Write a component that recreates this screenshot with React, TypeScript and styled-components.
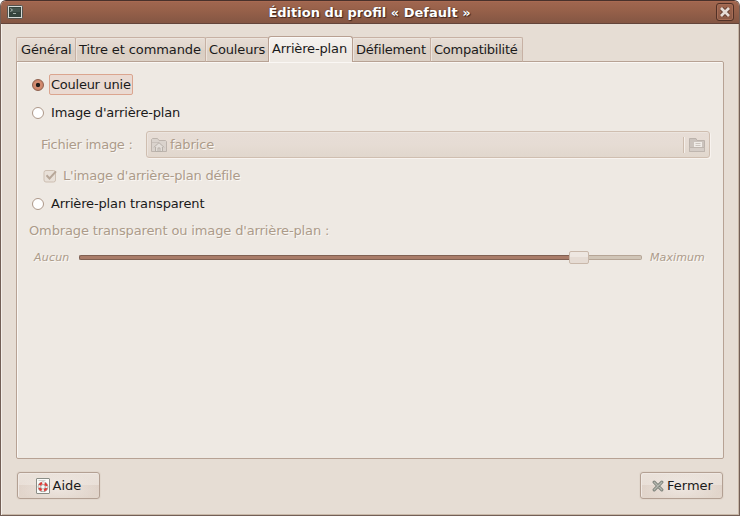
import React from "react";
import styled, { createGlobalStyle } from "styled-components";

const Global = createGlobalStyle`
  * { box-sizing: border-box; }
  html, body { margin: 0; padding: 0; background: #fff; }
  body { font-family: "DejaVu Sans", sans-serif; font-size: 13px; line-height: 20px; color: #1a1a1a; overflow: hidden; }
  svg { display: block; flex: none; }
`;

const Window = styled.div`
  width: 740px;
  height: 516px;
  display: flex;
  flex-direction: column;
  background: #e6ddd4;
  border: 1px solid #735f56;
  border-top-color: #49312b;
  border-radius: 6px 6px 0 0;
  overflow: hidden;
  box-shadow: inset 1px 0 #f5f0eb, inset -1px -1px #c8b8a8;
`;

const TitleBar = styled.header`
  height: 23px;
  flex: none;
  display: flex;
  align-items: center;
  padding: 0 5px 0 6px;
  background: linear-gradient(#b06e55 0, #a0664f 1px, #966049 10px, #845643 22px);
  border-bottom: 1px solid #63443a;
`;

const Title = styled.h1`
  flex: 1;
  margin: 0;
  padding: 1px 0 0;
  font-size: 13px;
  line-height: 20px;
  text-align: center;
  color: #fff;
  white-space: nowrap;
  text-shadow: 1px 1px 1px #40251c, 0 0 1px #40251c;
`;

const CloseButton = styled.button`
  width: 18px;
  height: 18px;
  padding: 0;
  display: grid;
  place-items: center;
  border: 1px solid #513026;
  border-radius: 3px;
  background: linear-gradient(#a0664f, #8b5a46);
  box-shadow: inset 0 0 0 1px #a66d56;
`;

const Body = styled.main`
  flex: 1;
  display: flex;
  flex-direction: column;
  padding: 12px 15px 16px;
`;

const Tabs = styled.nav`
  height: 26px;
  display: flex;
  align-items: flex-end;
  margin-bottom: -1px;
`;

const Tab = styled.button<{ $w: number; $active?: boolean; $track?: number }>`
  font: inherit;
  color: #1a1a1a;
  width: ${(p) => p.$w}px;
  height: ${(p) => (p.$active ? 26 : 25)}px;
  padding: ${(p) => (p.$active ? "0 0 1px 3px" : "0 0 0 4px")};
  margin-right: -1px;
  border: 1px solid ${(p) => (p.$active ? "#b8a092" : "#c7b1a4")};
  border-bottom: ${(p) => (p.$active ? "0" : "1px solid #b7a294")};
  border-radius: ${(p) => (p.$active ? "3px 3px 0 0" : "2px 2px 0 0")};
  background: ${(p) =>
    p.$active
      ? "linear-gradient(#f5f2ef, #f1ece8 50%, #eee9e3 50%, #eee9e3)"
      : "linear-gradient(#e7ddd5, #e0d5cb 50%, #d9cec3 50%, #dcd1c6)"};
  box-shadow: inset 1px 1px ${(p) => (p.$active ? "#fbf9f7" : "#ece4dc")};
  position: relative;
  z-index: ${(p) => (p.$active ? 2 : 1)};
  letter-spacing: ${(p) => p.$track ?? 0}px;
  white-space: nowrap;
  display: flex;
  align-items: center;
  justify-content: flex-start;

  & + & {
    padding-left: 3px;
  }
`;

const Panel = styled.section`
  width: 708px;
  height: 398px;
  flex: none;
  border: 1px solid #b7a294;
  border-radius: 0 2px 2px 2px;
  background: #eee9e3;
  box-shadow: inset 1px 1px #faf7f4;
  padding: 12px 13px 0 12px;
`;

const Row = styled.div<{ $h: number; $left?: number; $gap?: number }>`
  height: ${(p) => p.$h}px;
  margin-bottom: ${(p) => p.$gap ?? 0}px;
  padding-left: ${(p) => p.$left ?? 0}px;
  display: flex;
  align-items: center;
`;

const Label = styled.span<{ $track?: number; $disabled?: boolean; $small?: boolean }>`
  white-space: nowrap;
  letter-spacing: ${(p) => p.$track ?? 0}px;
  color: ${(p) => (p.$disabled ? "#ac9b8a" : "#1a1a1a")};
  text-shadow: ${(p) => (p.$disabled ? "1px 1px #faf7f3" : "none")};
  font-size: ${(p) => (p.$small ? 11 : 13)}px;
  font-style: ${(p) => (p.$small ? "italic" : "normal")};
`;

const RadioDot = styled.span<{ $on?: boolean }>`
  width: 12px;
  height: 12px;
  flex: none;
  margin: 0 7px 0 3px;
  border-radius: 50%;
  border: 1px solid ${(p) => (p.$on ? "#8e5f4c" : "#ad9889")};
  background: ${(p) =>
    p.$on ? "radial-gradient(circle, #201b19 0 1.8px, #d88f73 2.6px, #c98267 5px)" : "#fff"};
`;

const Focus = styled.span`
  width: 84px;
  height: 21px;
  margin-left: -2px;
  padding: 0 0 0 1px;
  line-height: 19px;
  border: 1px solid #dba58f;
  border-radius: 2px;
  background: #eadad2;
`;

const FileButton = styled.div`
  width: 564px;
  height: 27px;
  margin-left: auto;
  padding: 0 4px;
  display: flex;
  align-items: center;
  gap: 3px;
  border: 1px solid #cfbeb0;
  border-radius: 3px;
  background: linear-gradient(#e7ddd6, #e6dcd4 50%, #e1d7cd);
  box-shadow: 1px 1px #f8f3ef, inset 1px 1px #ece5df;
`;

const Divider = styled.i`
  width: 2px;
  height: 16px;
  margin-left: auto;
  margin-right: 1px;
  background: #cdbcae;
  border-right: 1px solid #f5efea;
`;

const CheckGap = styled.i`
  width: 5px;
`;

const Track = styled.div`
  width: 563px;
  height: 14px;
  flex: none;
  display: flex;
  align-items: center;
`;

const Rail = styled.i<{ $w: number; $filled?: boolean }>`
  width: ${(p) => p.$w}px;
  height: 5px;
  border: 1px solid ${(p) => (p.$filled ? "#806052" : "#b5a596")};
  border-width: ${(p) => (p.$filled ? "1px 0 1px 1px" : "1px 1px 1px 0")};
  border-radius: ${(p) => (p.$filled ? "2px 0 0 2px" : "0 2px 2px 0")};
  background: ${(p) => (p.$filled ? "#a97c69" : "#d0c5b7")};
`;

const Thumb = styled.i`
  width: 20px;
  height: 13px;
  border: 1px solid #c9b8aa;
  border-radius: 2px;
  background: linear-gradient(#eee7e1 50%, #e6dcd4 50%);
`;

const ScaleEnd = styled.span<{ $w: number }>`
  width: ${(p) => p.$w}px;
  height: 20px;
  line-height: 19px;
  flex: none;
`;

const Footer = styled.footer`
  display: flex;
  justify-content: space-between;
  padding: 13px 1px 0;
`;

const ActionButton = styled.button<{ $shift?: number }>`
  width: 83px;
  height: 27px;
  padding: 0 0 0 ${(p) => p.$shift ?? 0}px;
  font: inherit;
  color: #1a1a1a;
  display: flex;
  align-items: center;
  justify-content: center;
  gap: 3px;
  border: 1px solid #b3a093;
  border-radius: 3px;
  background: radial-gradient(ellipse at 50% 60%, rgba(241, 235, 230, 0.8), transparent 70%),
    linear-gradient(#eae2db, #e9dfd7 48%, #e0d3c9 50%, #e2d6cc);
  box-shadow: inset 1px 1px #f0e9e4, 0 0 0 1px #e1d7cd;
`;

const TerminalIcon = () => (
  <svg width="16" height="14" viewBox="0 0 16 14">
    <rect x=".5" y=".5" width="15" height="13" rx="1" fill="#d6dad6" stroke="#55534e" />
    <rect x="2" y="2" width="12" height="10" fill="#35443d" />
    <path d="M3 3h10v4H3z" fill="#46554e" />
    <path d="M3.500 3.500l2 1.500-2 1.500M6 8.500h3" fill="none" stroke="#c3ccc5" strokeWidth=".8" />
  </svg>
);

const TitleCross = () => (
  <svg width="12" height="12" viewBox="0 0 12 12">
    <path d="M2.500 2.500l7 7m0-7l-7 7" stroke="#5b372b" strokeWidth="4.400" />
    <path d="M2 2l8 8m0-8L2 10" stroke="#e6dcd6" strokeWidth="2.700" />
  </svg>
);

const HomeFolder = () => (
  <svg width="16" height="16" viewBox="0 0 16 16">
    <path d="M.5 14.500V2.500l1-1h5l1.500 2h6.500l1 1v10z" fill="#dad3cd" stroke="#bdb4ad" />
    <path d="M1 5.500h7" stroke="#c9c1bb" />
    <path d="M4.500 10v4.500h7V10M2.700 10.500L8 5.700l5.300 4.800" fill="#e3ded9" stroke="#b7b0a9" />
    <path d="M7 14v-3h2v3" fill="none" stroke="#b7b0a9" />
  </svg>
);

const OpenFolder = () => (
  <svg width="16" height="16" viewBox="0 0 16 16">
    <path d="M.5 14.500V1.500h6.500l1 2h7.500v11z" fill="#cbc3bd" stroke="#bcb3ac" />
    <path d="M5 5h8v6H5z" fill="#f0ece8" />
    <path d="M6.500 6.500h5m-5 2h5" stroke="#cbc4be" />
    <path d="M.5 10.500h15v4H.5z" fill="#d5cdc7" stroke="#bfb6af" />
  </svg>
);

const DisabledCheck = () => (
  <svg width="15" height="14" viewBox="0 0 15 14">
    <rect x="1" y="1.500" width="11.500" height="11.500" rx="2" fill="#e8e0d8" stroke="#cdbfb2" />
    <path d="M3.500 6.300l3 3.200L13 2.300" fill="none" stroke="#b7a799" strokeWidth="2" />
  </svg>
);

const HelpIcon = () => (
  <svg width="14" height="16" viewBox="0 0 14 16">
    <rect x=".5" y=".5" width="13" height="15" rx=".5" fill="#fbfbf9" stroke="#8a8d86" />
    <path d="M2.500 2.500h7" stroke="#cfd1cd" />
    <circle cx="7" cy="8.800" r="3.600" fill="none" stroke="#8f8f88" strokeWidth="3.400" />
    <circle cx="7" cy="8.800" r="3.600" fill="none" stroke="#f2efec" strokeWidth="2.200" />
    <circle cx="7" cy="8.800" r="3.700" fill="none" stroke="#e03a36" strokeWidth="2.200" strokeDasharray="3.200 2.612" strokeDashoffset="-1.306" />
  </svg>
);

const GreyCross = () => (
  <svg width="12" height="12" viewBox="0 0 12 12">
    <path d="M2.200 2.200l7.600 7.600m0-7.600L2.200 9.800" stroke="#7d8079" strokeWidth="3.200" strokeLinecap="round" />
    <path d="M2.200 2.200l7.600 7.600m0-7.600L2.200 9.800" stroke="#b4b8b0" strokeWidth="1.400" strokeLinecap="round" />
  </svg>
);

export default function App() {
  return (
    <>
      <Global />
      <Window>
        <TitleBar>
          <TerminalIcon />
          <Title>Édition du profil « Default »</Title>
          <CloseButton aria-label="Fermer la fenêtre"><TitleCross /></CloseButton>
        </TitleBar>
        <Body>
          <Tabs>
            <Tab $w={60} $track={-0.1}>Général</Tab>
            <Tab $w={131} $track={-0.1}>Titre et commande</Tab>
            <Tab $w={64} $track={-0.15}>Couleurs</Tab>
            <Tab $w={85} $track={-0.15} $active>Arrière-plan</Tab>
            <Tab $w={79} $track={-0.2}>Défilement</Tab>
            <Tab $w={93} $track={-0.25}>Compatibilité</Tab>
          </Tabs>
          <Panel>
            <Row $h={21} $gap={8}>
              <RadioDot $on />
              <Focus><Label $track={-0.25}>Couleur unie</Label></Focus>
            </Row>
            <Row $h={20} $gap={8}>
              <RadioDot />
              <Label $track={-0.17}>Image d'arrière-plan</Label>
            </Row>
            <Row $h={27} $left={12} $gap={8}>
              <Label $disabled $track={-0.27}>Fichier image :</Label>
              <FileButton>
                <HomeFolder />
                <Label $disabled $track={-0.1}>fabrice</Label>
                <Divider />
                <OpenFolder />
              </FileButton>
            </Row>
            <Row $h={20} $left={14} $gap={8}>
              <DisabledCheck />
              <CheckGap />
              <Label $disabled $track={-0.21}>L'image d'arrière-plan défile</Label>
            </Row>
            <Row $h={20} $gap={7}>
              <RadioDot />
              <Label $track={-0.15}>Arrière-plan transparent</Label>
            </Row>
            <Row $h={20} $gap={6}>
              <Label $disabled $track={-0.13}>Ombrage transparent ou image d'arrière-plan :</Label>
            </Row>
            <Row $h={20} $left={5}>
              <ScaleEnd $w={45}><Label $disabled $small $track={0.2}>Aucun</Label></ScaleEnd>
              <Track>
                <Rail $w={490} $filled />
                <Thumb />
                <Rail $w={53} />
              </Track>
              <Row $h={20} $left={8} as="span">
                <ScaleEnd $w={56}><Label $disabled $small $track={0.1}>Maximum</Label></ScaleEnd>
              </Row>
            </Row>
          </Panel>
          <Footer>
            <ActionButton><HelpIcon />Aide</ActionButton>
            <ActionButton $shift={2}><GreyCross />Fermer</ActionButton>
          </Footer>
        </Body>
      </Window>
    </>
  );
}
